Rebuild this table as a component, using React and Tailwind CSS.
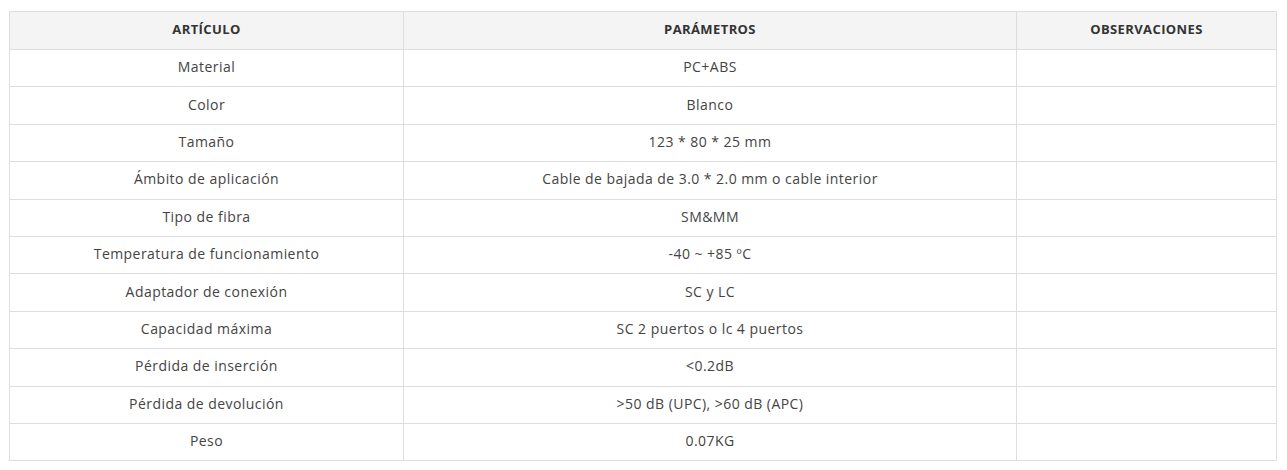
const ROWS = [
    ['Material', 'PC+ABS'],
    ['Color', 'Blanco'],
    ['Tamaño', '123 * 80 * 25 mm'],
    ['Ámbito de aplicación', 'Cable de bajada de 3.0 * 2.0 mm o cable interior'],
    ['Tipo de fibra', 'SM&MM'],
    ['Temperatura de funcionamiento', '-40 ~ +85 ºC'],
    ['Adaptador de conexión', 'SC y LC'],
    ['Capacidad máxima', 'SC 2 puertos o lc 4 puertos'],
    ['Pérdida de inserción', '<0.2dB'],
    ['Pérdida de devolución', '>50 dB (UPC), >60 dB (APC)'],
    ['Peso', '0.07KG'],
];

export default function App() {
    return (
        <div className="bg-white w-[1287px] h-[470px] pt-[11px] pl-[9px]" style={{ fontFamily: '"Open Sans", "Noto Sans", sans-serif' }}>
            <table className="border-collapse w-[1267px] table-fixed text-center text-[14px] text-[#444] tracking-[0.45px]">
                <colgroup>
                    <col className="w-[394px]" />
                    <col className="w-[613px]" />
                    <col className="w-[260px]" />
                </colgroup>
                <thead>
                    {/* header row */}
                    <tr className="bg-[#f4f4f4] h-[38px]">
                        <th className="border border-[#dedede] p-0 pb-[2px] font-bold text-[13px] text-[#333] tracking-[0.4px]">ARTÍCULO</th>
                        <th className="border border-[#dedede] p-0 pb-[2px] font-bold text-[13px] text-[#333] tracking-[0.4px]">PARÁMETROS</th>
                        <th className="border border-[#dedede] p-0 pb-[2px] font-bold text-[13px] text-[#333] tracking-[0.4px]">OBSERVACIONES</th>
                    </tr>
                </thead>
                <tbody>
                    {ROWS.map(([k, v]) => (
                        <tr key={k} className="h-[37.4px]">
                            <td className="border border-[#dedede] p-0 pb-[3px]">{k}</td>
                            <td className="border border-[#dedede] p-0 pb-[3px]">{v}</td>
                            <td className="border border-[#dedede] p-0"></td>
                        </tr>
                    ))}
                </tbody>
            </table>
        </div>
    );
}
